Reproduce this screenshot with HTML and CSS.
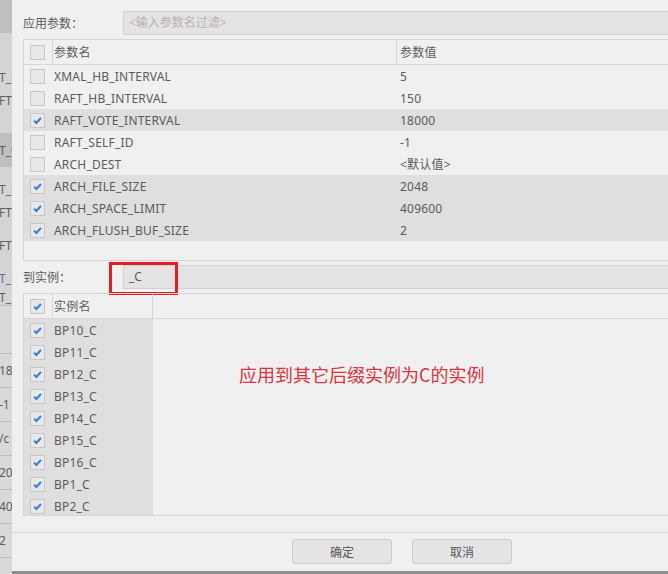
FILE: index.html
```html
<!DOCTYPE html>
<html lang="zh-CN">
<head>
<meta charset="utf-8">
<title>应用参数</title>
<link rel="stylesheet" href="styles.css">
</head>
<body>
<div class="desk">
  <div class="behind">
    <div class="dark"></div>
    <div></div>
    <div>T_:</div>
    <div>FT_</div>
    <div></div>
    <div class="dark">T_9</div>
    <div></div>
    <div>T_:</div>
    <div>FT_</div>
    <div></div>
    <div>FT_</div>
    <div></div>
    <div class="blue">T_:</div>
    <div>T_</div>
    <div class="ln"></div>
    <div class="ln">18</div>
    <div class="ln">-1</div>
    <div class="ln">/c</div>
    <div class="ln">20</div>
    <div class="ln">40</div>
    <div class="ln">2</div>
    <div class="ln"></div>
  </div>

  <div class="dialog">
    <div class="filter">
      <span class="label">应用参数<span class="colon">：</span></span>
      <div class="input placeholder">&lt;输入参数名过滤&gt;</div>
    </div>

    <div class="grid params">
      <div class="row head">
        <div class="cell chk"><span class="box"></span></div>
        <div class="cell name">参数名</div>
        <div class="cell val">参数值</div>
      </div>
      <div class="row">
        <div class="cell chk"><span class="box"></span></div>
        <div class="cell name">XMAL_HB_INTERVAL</div>
        <div class="cell val">5</div>
      </div>
      <div class="row">
        <div class="cell chk"><span class="box"></span></div>
        <div class="cell name">RAFT_HB_INTERVAL</div>
        <div class="cell val">150</div>
      </div>
      <div class="row on">
        <div class="cell chk"><span class="box"><svg viewBox="0 0 13 13" width="13" height="13"><path d="M3 6.6 L5.4 9 L10 3.8" fill="none" stroke="#2f80d6" stroke-width="2"/></svg></span></div>
        <div class="cell name">RAFT_VOTE_INTERVAL</div>
        <div class="cell val">18000</div>
      </div>
      <div class="row">
        <div class="cell chk"><span class="box"></span></div>
        <div class="cell name">RAFT_SELF_ID</div>
        <div class="cell val">-1</div>
      </div>
      <div class="row">
        <div class="cell chk"><span class="box"></span></div>
        <div class="cell name">ARCH_DEST</div>
        <div class="cell val">&lt;默认值&gt;</div>
      </div>
      <div class="row on">
        <div class="cell chk"><span class="box"><svg viewBox="0 0 13 13" width="13" height="13"><path d="M3 6.6 L5.4 9 L10 3.8" fill="none" stroke="#2f80d6" stroke-width="2"/></svg></span></div>
        <div class="cell name">ARCH_FILE_SIZE</div>
        <div class="cell val">2048</div>
      </div>
      <div class="row on">
        <div class="cell chk"><span class="box"><svg viewBox="0 0 13 13" width="13" height="13"><path d="M3 6.6 L5.4 9 L10 3.8" fill="none" stroke="#2f80d6" stroke-width="2"/></svg></span></div>
        <div class="cell name">ARCH_SPACE_LIMIT</div>
        <div class="cell val">409600</div>
      </div>
      <div class="row on">
        <div class="cell chk"><span class="box"><svg viewBox="0 0 13 13" width="13" height="13"><path d="M3 6.6 L5.4 9 L10 3.8" fill="none" stroke="#2f80d6" stroke-width="2"/></svg></span></div>
        <div class="cell name">ARCH_FLUSH_BUF_SIZE</div>
        <div class="cell val">2</div>
      </div>
    </div>

    <div class="filter inst">
      <span class="label">到实例<span class="colon">：</span></span>
      <div class="input">_C</div>
      <span class="mark"></span>
    </div>

    <div class="grid instances">
      <div class="row head">
        <div class="cell chk"><span class="box"><svg viewBox="0 0 13 13" width="13" height="13"><path d="M3 6.6 L5.4 9 L10 3.8" fill="none" stroke="#2f80d6" stroke-width="2"/></svg></span></div>
        <div class="cell iname">实例名</div>
      </div>
      <div class="row">
        <div class="cell chk"><span class="box"><svg viewBox="0 0 13 13" width="13" height="13"><path d="M3 6.6 L5.4 9 L10 3.8" fill="none" stroke="#2f80d6" stroke-width="2"/></svg></span></div>
        <div class="cell iname">BP10_C</div>
      </div>
      <div class="row">
        <div class="cell chk"><span class="box"><svg viewBox="0 0 13 13" width="13" height="13"><path d="M3 6.6 L5.4 9 L10 3.8" fill="none" stroke="#2f80d6" stroke-width="2"/></svg></span></div>
        <div class="cell iname">BP11_C</div>
      </div>
      <div class="row">
        <div class="cell chk"><span class="box"><svg viewBox="0 0 13 13" width="13" height="13"><path d="M3 6.6 L5.4 9 L10 3.8" fill="none" stroke="#2f80d6" stroke-width="2"/></svg></span></div>
        <div class="cell iname">BP12_C</div>
      </div>
      <div class="row">
        <div class="cell chk"><span class="box"><svg viewBox="0 0 13 13" width="13" height="13"><path d="M3 6.6 L5.4 9 L10 3.8" fill="none" stroke="#2f80d6" stroke-width="2"/></svg></span></div>
        <div class="cell iname">BP13_C</div>
      </div>
      <div class="row">
        <div class="cell chk"><span class="box"><svg viewBox="0 0 13 13" width="13" height="13"><path d="M3 6.6 L5.4 9 L10 3.8" fill="none" stroke="#2f80d6" stroke-width="2"/></svg></span></div>
        <div class="cell iname">BP14_C</div>
      </div>
      <div class="row">
        <div class="cell chk"><span class="box"><svg viewBox="0 0 13 13" width="13" height="13"><path d="M3 6.6 L5.4 9 L10 3.8" fill="none" stroke="#2f80d6" stroke-width="2"/></svg></span></div>
        <div class="cell iname">BP15_C</div>
      </div>
      <div class="row">
        <div class="cell chk"><span class="box"><svg viewBox="0 0 13 13" width="13" height="13"><path d="M3 6.6 L5.4 9 L10 3.8" fill="none" stroke="#2f80d6" stroke-width="2"/></svg></span></div>
        <div class="cell iname">BP16_C</div>
      </div>
      <div class="row">
        <div class="cell chk"><span class="box"><svg viewBox="0 0 13 13" width="13" height="13"><path d="M3 6.6 L5.4 9 L10 3.8" fill="none" stroke="#2f80d6" stroke-width="2"/></svg></span></div>
        <div class="cell iname">BP1_C</div>
      </div>
      <div class="row">
        <div class="cell chk"><span class="box"><svg viewBox="0 0 13 13" width="13" height="13"><path d="M3 6.6 L5.4 9 L10 3.8" fill="none" stroke="#2f80d6" stroke-width="2"/></svg></span></div>
        <div class="cell iname">BP2_C</div>
      </div>
      <div class="note">应用到其它后缀实例为C的实例</div>
    </div>

    <div class="footer">
      <button class="btn">确定</button>
      <button class="btn">取消</button>
    </div>
  </div>
</div>
</body>
</html>
```

FILE: styles.css
```css
* { box-sizing: border-box; }
html, body { margin: 0; padding: 0; }
body {
  width: 668px;
  height: 574px;
  overflow: hidden;
  background: #8f8f8f;
  font-family: "Noto Sans", "Noto Sans CJK SC", sans-serif;
  font-size: 12px;
  color: #5a5a5a;
}
.desk { display: flex; height: 574px; }

/* window behind the dialog */
.behind {
  width: 12px;
  flex: none;
  overflow: hidden;
  background: #d4d4d4;
  display: grid;
  grid-template-rows: 33px 33px 23px 22px 22px 34px 10px 24px 22px 11px 22px 11px 22px 16px 48px 34px 34px 34px 34px 34px 34px 1fr;
  color: #5c5c5c;
  white-space: nowrap;
}
.behind > div { display: flex; align-items: center; margin-left: -1px; }
.behind .dark { background: #bfbfbf; }
.behind .blue { color: #4a6f9c; }
.behind .ln { border-top: 1px solid #bdbdbd; background: #d9d9d9; }

/* dialog */
.dialog {
  width: 780px;
  flex: none;
  height: 571px;
  background: #f0f0f0;
  padding: 11px 0 0 11px;
  display: flex;
  flex-direction: column;
}
.filter {
  display: flex;
  align-items: center;
  height: 24px;
  flex: none;
  position: relative;
}
.filter .label { width: 100px; flex: none; }
.colon { font-family: "Noto Sans CJK TC", sans-serif; }
.input {
  flex: 1;
  height: 24px;
  border: 1px solid #d4d0d2;
  background: #e6e3e5;
  padding-left: 5px;
  line-height: 22px;
  color: #5a5a5a;
}
.placeholder { color: #b6b2b4; }
.inst { margin-top: 4px; }
.mark {
  position: absolute;
  left: 86px;
  top: -3px;
  width: 69px;
  height: 33px;
  border: 3px solid #e31e26;
}

.grid {
  flex: none;
  margin-top: 4px;
  border: 1px solid #d5d5d5;
  border-right: none;
  overflow: hidden;
  position: relative;
}
.params { height: 222px; }
.instances { height: 223px; }

.row { display: flex; height: 22px; }
.row.head { height: 25px; border-bottom: 1px solid #d5d5d5; }
.cell { display: flex; align-items: center; white-space: nowrap; letter-spacing: 0.2px; }
.chk { width: 29px; flex: none; padding-left: 6px; }
.name { width: 344px; flex: none; padding-left: 1px; }
.val { flex: 1; padding-left: 3px; }
.iname { width: 100px; flex: none; padding-left: 1px; }
.head .chk, .head .name, .head .iname { border-right: 1px solid #d5d5d5; }
.params .row.on { background: #dfdfdf; }
.instances .row:not(.head) .chk,
.instances .row:not(.head) .iname { background: #dfdfdf; }

.box {
  width: 15px;
  height: 15px;
  border: 1px solid #c8c6c7;
  background: #e9e7e8;
  display: flex;
  align-items: center;
  justify-content: center;
}
.box svg { display: block; }

.note {
  position: absolute;
  left: 215px;
  top: 70px;
  font-family: "Noto Sans CJK SC", sans-serif;
  font-size: 18px;
  line-height: 20px;
  color: #d9343f;
  white-space: nowrap;
}

.footer {
  margin-top: 16px;
  margin-left: -11px;
  border-top: 1px solid #d8d8d8;
  padding-top: 6px;
  display: flex;
  justify-content: center;
  gap: 20px;
}
.btn {
  width: 100px;
  height: 25px;
  border: 1px solid #cfcbcd;
  border-radius: 3px;
  background: #e6e3e5;
  font-family: "Noto Sans CJK SC", sans-serif;
  font-size: 12px;
  color: #555;
  padding: 0;
}
```
